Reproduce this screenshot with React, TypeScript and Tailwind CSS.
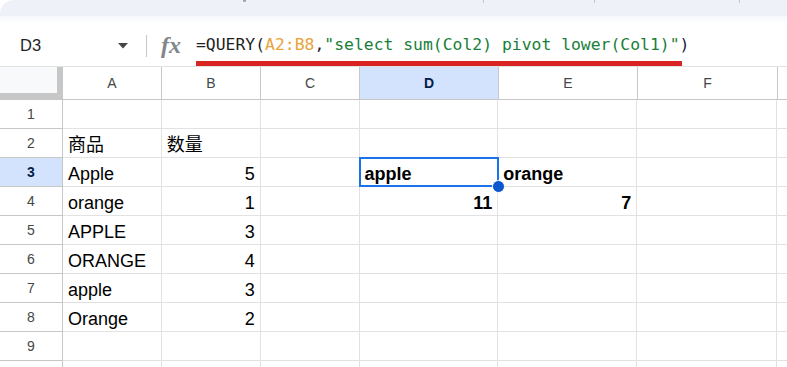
import React from 'react';

type Cell = { v: string; right?: boolean; bold?: boolean };

const colW = ['w-[63px]', 'w-[99px]', 'w-[99px]', 'w-[99px]', 'w-[139px]', 'w-[139px]', 'w-[140px]', 'w-[9px]'];
const letters = ['', 'A', 'B', 'C', 'D', 'E', 'F', ''];

const rows: Cell[][] = [
  [{ v: '' }, { v: '' }],
  [{ v: '商品' }, { v: '数量' }],
  [{ v: 'Apple' }, { v: '5', right: true }, { v: '' }, { v: 'apple', bold: true }, { v: 'orange', bold: true }],
  [{ v: 'orange' }, { v: '1', right: true }, { v: '' }, { v: '11', right: true, bold: true }, { v: '7', right: true, bold: true }],
  [{ v: 'APPLE' }, { v: '3', right: true }],
  [{ v: 'ORANGE' }, { v: '4', right: true }],
  [{ v: 'apple' }, { v: '3', right: true }],
  [{ v: 'Orange' }, { v: '2', right: true }],
  [],
  [],
];

function FormulaBar() {
  return (
    <div className="h-[42px] flex items-center relative border-b border-[#e1e3e1] bg-white">
      <div className="w-[146px] flex items-center justify-between pl-[20px] pr-[18px]">
        <span className="text-[16.5px] text-[#1f1f1f]">D3</span>
        <svg width="10" height="6" viewBox="0 0 10 6">
          <polygon points="0,0 10,0 5,5.5" fill="#444746" />
        </svg>
      </div>
      <div className="w-px h-[22px] bg-[#c4c7c5]" />
      <span className="ml-[14px] w-[24px] text-[24px] italic font-bold text-[#80868b] font-['Liberation_Serif',serif] leading-none -mt-[2px]">fx</span>
      <div className="ml-[11px] font-['DejaVu_Sans_Mono',monospace] text-[16.4px] text-[#1f1f1f] whitespace-pre">
        <span>=QUERY(</span>
        <span className="text-[#e8a33a]">A2:B8</span>
        <span>,</span>
        <span className="text-[#188038]">"select sum(Col2) pivot lower(Col1)"</span>
        <span className="text-[#1b1c3a]">)</span>
      </div>
      <div className="absolute left-[196px] top-[36px] w-[486px] h-[5px] bg-[#d92424]" />
    </div>
  );
}

function HeaderRow() {
  return (
    <div className="flex h-[33px]">
      {letters.map((l, i) => {
        if (i === 0) {
          return <div key={i} className={`${colW[i]} h-full bg-[#f8f9fa] border-r-[6px] border-b-[7px] border-[#c7c7c7]`} />;
        }
        const active = l === 'D';
        return (
          <div
            key={i}
            className={`${colW[i]} h-full flex items-center justify-center text-[14px] border-b border-[#c7c7c7] ${i < 7 ? 'border-r' : ''} ${
              active ? 'bg-[#d3e3fd] text-[#041e49] font-bold' : 'bg-white text-[#444746]'
            }`}
          >
            {l}
          </div>
        );
      })}
    </div>
  );
}

function DataRow({ n, cells }: { n: number; cells: Cell[] }) {
  const active = n === 3;
  return (
    <div className="flex h-[29px]">
      <div
        className={`${colW[0]} h-full flex items-center justify-center text-[14px] border-r border-b border-[#c7c7c7] ${
          active ? 'bg-[#d3e3fd] text-[#041e49] font-bold' : 'bg-white text-[#444746]'
        }`}
      >
        {n < 10 ? n : ''}
      </div>
      {colW.slice(1).map((w, j) => {
        const c = cells[j];
        return (
          <div
            key={j}
            className={`${w} h-full relative flex items-end pb-[2px] px-[5px] border-b border-[#e2e2e2] ${j < 6 ? 'border-r' : ''} ${
              c?.right ? 'justify-end' : 'justify-start'
            }`}
          >
            {c && c.v && (
              <span className={`text-[18px] leading-[20px] text-black whitespace-nowrap ${c.bold ? 'font-bold' : ''}`}>{c.v}</span>
            )}
            {n === 3 && j === 3 && (
              <div className="absolute z-10 -left-[1px] -top-[1px] w-[140px] h-[30px] border-2 border-[#1a73e8]">
                <div className="absolute -right-[8px] -bottom-[8px] w-[13px] h-[13px] rounded-full bg-[#0b57d0] border border-white" />
              </div>
            )}
          </div>
        );
      })}
    </div>
  );
}

export default function App() {
  return (
    <div className="w-[787px] h-[367px] overflow-hidden bg-white font-['Liberation_Sans','Noto_Sans_CJK_SC',Arial,sans-serif]">
      <div className="h-[16px] bg-[#eef2f8] rounded-tl-[14px] relative">
        <div className="absolute left-[243px] top-0 w-[3px] h-[2px] rounded-b bg-[#9aa0a6]" />
        <div className="absolute left-[483px] top-0 w-px h-[3px] bg-[#c4c7c5]" />
        <div className="absolute left-[594px] top-0 w-px h-[3px] bg-[#c4c7c5]" />
        <div className="absolute left-[739px] top-0 w-px h-[3px] bg-[#c4c7c5]" />
      </div>
      <div className="h-[9px] bg-gradient-to-b from-[#f5f8fc] to-white" />
      <FormulaBar />
      <HeaderRow />
      {rows.map((cells, i) => (
        <DataRow key={i} n={i + 1} cells={cells} />
      ))}
    </div>
  );
}
